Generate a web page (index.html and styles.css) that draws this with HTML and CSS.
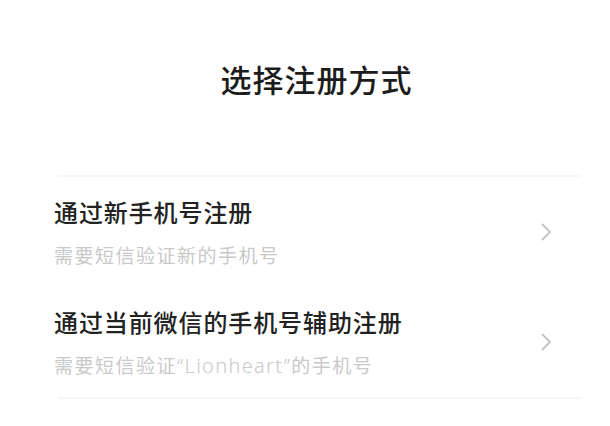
FILE: index.html
```html
<!DOCTYPE html>
<html lang="zh-CN">
<head>
<meta charset="utf-8">
<link rel="stylesheet" href="styles.css">
</head>
<body>
<div class="page">
  <h1 class="heading">选择注册方式</h1>
  <div class="list">
    <div class="item">
      <div class="texts">
        <div class="title">通过新手机号注册</div>
        <div class="sub">需要短信验证新的手机号</div>
      </div>
      <svg class="chev" width="14" height="20" viewBox="0 0 14 20"><path d="M3 2 L11 10 L3 18" fill="none" stroke="#c2c2c2" stroke-width="1.8"/></svg>
    </div>
    <div class="item">
      <div class="texts">
        <div class="title">通过当前微信的手机号辅助注册</div>
        <div class="sub">需要短信验证<span class="latin">“Lionheart”</span>的手机号</div>
      </div>
      <svg class="chev" width="14" height="20" viewBox="0 0 14 20"><path d="M3 2 L11 10 L3 18" fill="none" stroke="#c2c2c2" stroke-width="1.8"/></svg>
    </div>
  </div>
</div>
</body>
</html>
```
FILE: styles.css
```css
html, body {
  margin: 0;
  padding: 0;
  background: #ffffff;
}
body {
  font-family: "Noto Sans CJK SC", "Noto Sans", sans-serif;
  width: 610px;
  height: 426px;
  overflow: hidden;
}
.page {
  display: flex;
  flex-direction: column;
}
.heading {
  margin: 61px 0 0 0;
  padding-left: 23px;
  font-size: 31px;
  line-height: 36px;
  font-weight: 500;
  letter-spacing: 1px;
  color: #1c1c1c;
  text-align: center;
}
.list {
  margin: 78px 30px 0 58px;
  border-top: 2px solid #f6f6f6;
  border-bottom: 2px solid #f6f6f6;
}
.item {
  display: flex;
  align-items: center;
  justify-content: space-between;
  height: 110px;
  padding-right: 27px;
}
.texts {
  display: flex;
  flex-direction: column;
  margin-left: -4px;
}
.title {
  font-size: 24px;
  line-height: 28px;
  color: #222222;
  font-weight: 500;
  letter-spacing: 0.9px;
}
.sub {
  margin-top: 18px;
  font-size: 19px;
  line-height: 22px;
  color: #c9c9c9;
  letter-spacing: 1.5px;
}
.latin {
  font-family: "Noto Sans", sans-serif;
  font-weight: 300;
  font-size: 20px;
  letter-spacing: 1.3px;
}
.chev {
  display: block;
}
```
